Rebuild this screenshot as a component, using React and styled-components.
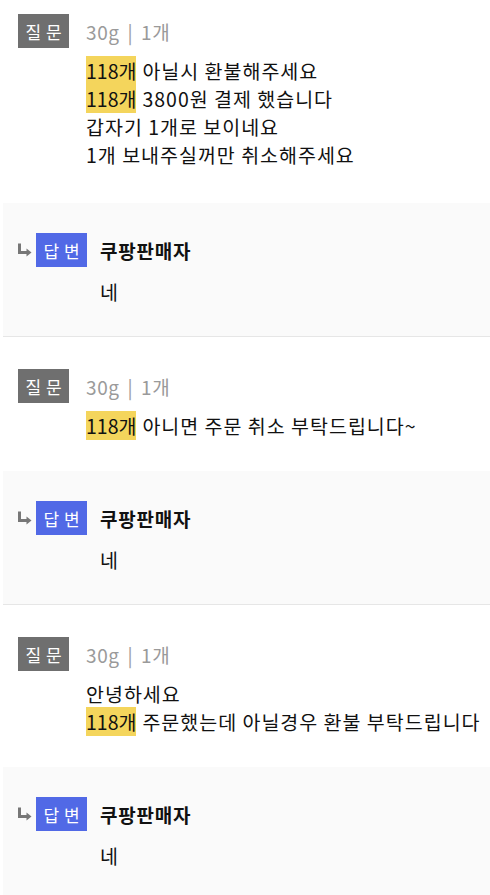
import React from "react"
import styled, { createGlobalStyle } from "styled-components"

const GlobalStyle = createGlobalStyle`
  body {
    margin: 0;
    background: #fff;
    font-family: "Noto Sans CJK KR", "Noto Sans", sans-serif;
    color: #111;
  }
`

const threads = [
  {
    meta: "30g | 1개",
    lines: [
      { mark: "118개", text: "아닐시 환불해주세요" },
      { mark: "118개", text: "3800원 결제 했습니다" },
      { text: "갑자기 1개로 보이네요" },
      { text: "1개 보내주실꺼만 취소해주세요" },
    ],
    top: 14,
    bottom: 34,
  },
  {
    meta: "30g | 1개",
    lines: [{ mark: "118개", text: "아니면 주문 취소 부탁드립니다~" }],
  },
  {
    meta: "30g | 1개",
    lines: [
      { text: "안녕하세요" },
      { mark: "118개", text: "주문했는데 아닐경우 환불 부탁드립니다" },
    ],
  },
]

const Page = styled.div`
  width: 490px;
  overflow: hidden;
`

const Question = styled.section`
  padding: ${(p) => p.$top ?? 32}px 0 ${(p) => p.$bottom ?? 31}px 18px;
`

const Head = styled.div`
  display: flex;
  align-items: center;
  gap: 17px;
`

const Badge = styled.span`
  display: inline-flex;
  align-items: center;
  justify-content: center;
  width: 51px;
  height: 34px;
  flex-shrink: 0;
  background: ${(p) => (p.$answer ? "#5169e6" : "#6f6f6f")};
  color: #fff;
  font-size: 17px;
  word-spacing: 1px;
`

const Meta = styled.span`
  font-size: 19px;
  letter-spacing: 0.6px;
  word-spacing: 3px;
  color: #9a9a9a;
`

const Body = styled.div`
  margin: 9px 0 0 68px;
  font-size: 19.5px;
  letter-spacing: 1px;
  line-height: 28px;
  white-space: nowrap;
`

const Mark = styled.span`
  background: #f4d55c;
  margin-right: 6px;
  letter-spacing: 0;
`

const Answer = styled.section`
  margin-left: 3px;
  padding: 30px 0 30px 15px;
  background: #fafafa;
  border-bottom: 1px solid #e6e6e6;
`

const AnswerHead = styled.div`
  display: flex;
  align-items: center;
`

const Arrow = styled.svg`
  width: 14px;
  height: 14px;
  margin-right: 4px;
  flex-shrink: 0;
`

const Seller = styled.span`
  margin-left: 13px;
  font-size: 19px;
  letter-spacing: 0.8px;
  font-weight: 700;
  color: #111;
`

const Reply = styled.div`
  margin: 11px 0 0 82px;
  font-size: 19.5px;
  line-height: 28px;
`

const ReplyArrow = () => (
  <Arrow viewBox="0 0 14 14">
    <path d="M1.5 0.5 V9.5 H9" stroke="#777" strokeWidth="3" fill="none" />
    <path d="M8.5 5.5 L13.5 9.5 L8.5 13.5 Z" fill="#777" />
  </Arrow>
)

const App = () => {
  return (
    <Page>
      <GlobalStyle />
      {threads.map((t, i) => (
        <div key={i}>
          <Question $top={t.top} $bottom={t.bottom}>
            <Head>
              <Badge>질 문</Badge>
              <Meta>{t.meta}</Meta>
            </Head>
            <Body>
              {t.lines.map((l, j) => (
                <div key={j}>
                  {l.mark && <Mark>{l.mark}</Mark>}
                  {l.text}
                </div>
              ))}
            </Body>
          </Question>
          <Answer>
            <AnswerHead>
              <ReplyArrow />
              <Badge $answer>답 변</Badge>
              <Seller>쿠팡판매자</Seller>
            </AnswerHead>
            <Reply>네</Reply>
          </Answer>
        </div>
      ))}
    </Page>
  )
}

export default App
